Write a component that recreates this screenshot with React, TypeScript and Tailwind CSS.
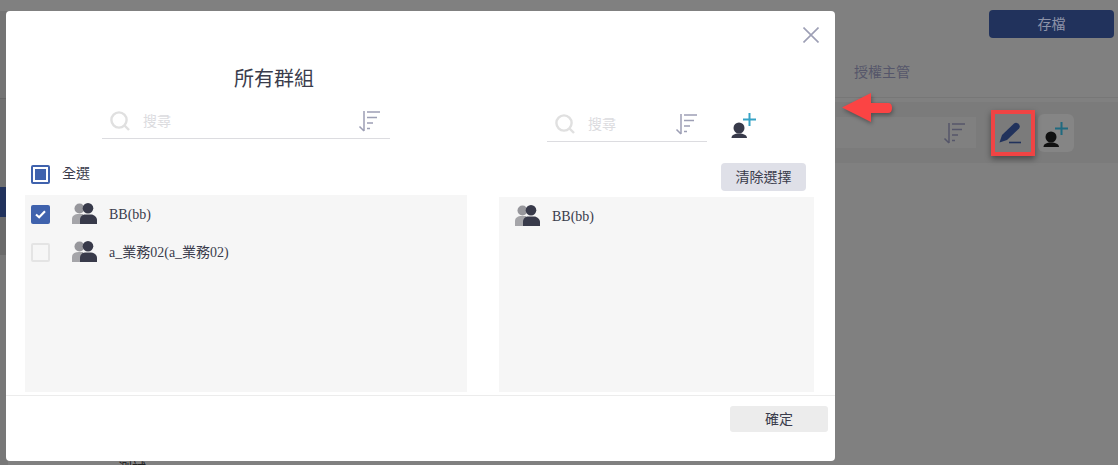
const cjk = { fontFamily: '"Liberation Serif","Noto Sans CJK TC",serif' };

function Group({ className = "" }: { className?: string }) {
  return (
    <svg viewBox="0 0 25 22" className={`w-[25px] h-[22px] ${className}`}>
      <circle cx="7.5" cy="5.5" r="5" fill="#97979c" />
      <path d="M0 21 V16 C0 13 2.5 11 7 11 L11 11 V21 Z" fill="#a5a5a9" />
      <circle cx="16" cy="5.3" r="5.3" fill="#383a4a" />
      <path d="M8 21 V17 C8 13 11 11.5 13 11.5 H19 C22 11.5 25 14 25 17 V21 Z" fill="#383a4a" />
    </svg>
  );
}

function SortIcon({ color = "#9d9fb5" }: { color?: string }) {
  return (
    <svg viewBox="0 0 24 24" className="w-[24px] h-[24px]" fill="none" stroke={color} strokeWidth="1.5">
      <path d="M7 2 V22 M2.5 17.5 L7 22" />
      <path d="M10 3 H23 M10 8.5 H20 M10 14 H16 M10 19.5 H13" />
    </svg>
  );
}

function SearchIcon() {
  return (
    <svg viewBox="0 0 20 20" className="w-[20px] h-[20px]" fill="none" stroke="#e0e0e0" strokeWidth="2.4">
      <circle cx="9" cy="9" r="7.6" />
      <path d="M14.5 14.5 L19 19" />
    </svg>
  );
}

function AddUser({ plus = "#37a3c6", body = "#383a4a" }: { plus?: string; body?: string }) {
  return (
    <svg viewBox="0 0 26 26" className="w-[26px] h-[26px]">
      <circle cx="8" cy="16" r="5.5" fill={body} />
      <path d="M0.5 26 C0.5 23 3.5 21.5 8 21.5 C12.5 21.5 16 23 16 26 Z" fill={body} />
      <path d="M18.5 1 V14 M12 7.5 H25" stroke={plus} strokeWidth="2" fill="none" />
    </svg>
  );
}

function Search({ width }: { width: string }) {
  return (
    <div className={`flex items-center border-b border-[#dcdce0] h-[35px] pl-[8px] pr-[9px] ${width}`}>
      <SearchIcon />
      <span className="text-[14px] text-[#dcdcdf] ml-[13px] flex-1">搜尋</span>
      <SortIcon />
    </div>
  );
}

function Row({ name, checked }: { name: string; checked?: boolean }) {
  return (
    <div className="flex items-center h-[38px] pl-[6px]">
      {checked ? (
        <div className="w-[19px] h-[19px] rounded-[2px] bg-[#3f62ad] flex items-center justify-center">
          <svg viewBox="0 0 12 10" className="w-[11px] h-[9px]" fill="none" stroke="#fff" strokeWidth="2.4">
            <path d="M1 5 L4.5 8 L11 1.5" />
          </svg>
        </div>
      ) : (
        <div className="w-[19px] h-[19px] rounded-[2px] border-2 border-[#e4e4e4] bg-[#f6f6f6]" />
      )}
      <Group className="ml-[22px]" />
      <span className="ml-[12px] text-[14px] text-[#3a3c4c]">{name}</span>
    </div>
  );
}

export default function App() {
  return (
    <div className="relative w-[1118px] h-[465px] overflow-hidden bg-[#808080]" style={cjk}>
      {/* underlying page, dimmed */}
      <div className="flex flex-col h-full">
        <div className="h-[98px] flex flex-col items-end pr-[4px] pt-[10px] border-b border-[#777777]">
          <div className="w-[125px] h-[28px] rounded-[4px] bg-[#21325c] text-[#8d93a8] text-[14px] flex items-center justify-center">存檔</div>
          <div className="self-start ml-[854px] mt-[24px] text-[14px] text-[#55566a]">授權主管</div>
        </div>
        <div className="h-[61px] mt-[4px] bg-[#7b7b7b] flex items-center justify-end pr-[44px]">
          <div className="flex items-center justify-end w-[140px] h-[31px] bg-[#808080] pr-[10px] mr-[18px]">
            <SortIcon color="#55566a" />
          </div>
          <div className="w-[36px] h-[36px] flex items-center justify-center mr-[8px] pr-[3px]">
            <svg viewBox="0 0 24 22" className="w-[24px] h-[22px]">
              <path d="M0.5 20.5 L3 13 L15 1.5 Q17 0 19 1.5 L20 2.5 Q21.5 4.5 20 6.5 L8 18 Z" fill="#21325c" />
              <path d="M10 20.5 H22" stroke="#21325c" strokeWidth="1.6" />
            </svg>
          </div>
          <div className="w-[36px] h-[38px] rounded-[6px] bg-[#858585] flex items-center justify-center pt-[3px]">
            <AddUser plus="#1f6a80" body="#111" />
          </div>
        </div>
      </div>

      {/* annotation: red arrow */}
      <svg viewBox="0 0 52 30" className="absolute left-[841px] top-[93px] w-[52px] h-[30px] drop-shadow-[1px_2px_2px_rgba(0,0,0,0.35)]">
        <path d="M1 14.5 L30 0 V10 H47 Q51 10 51 15 Q51 20 47 20 H30 V29 Z" fill="#fb4444" />
      </svg>
      {/* annotation: red box */}
      <div className="absolute left-[991px] top-[110px] w-[44px] h-[46px] border-[4px] border-[#f04444] shadow-[0_3px_6px_rgba(0,0,0,0.4)]" />

      {/* left sidebar remnants */}
      <div className="absolute left-0 top-[11px] w-[8px] flex flex-col">
        <div className="h-[87px] bg-[#747474]" />
        <div className="h-[1px] bg-[#666666]" />
        <div className="h-[88px] bg-[#707070]" />
        <div className="h-[30px] bg-[#21325c]" />
        <div className="h-[38px] bg-[#6a6a6a]" />
        <div className="h-[210px] bg-[#777777]" />
      </div>
      <div className="absolute left-[118px] top-[458px] text-[14px] text-[#222]">測試</div>

      {/* modal */}
      <div className="absolute left-[6px] top-[11px] w-[829px] h-[450px] bg-white rounded-[4px] flex flex-col">
        <div className="relative flex-1 flex pl-[19px] gap-[32px] min-h-0">
          <button className="absolute right-[16px] top-[16px]">
            <svg viewBox="0 0 16 16" className="w-[16px] h-[16px]" fill="none" stroke="#9d9fb5" strokeWidth="1.6">
              <path d="M0.5 0.5 L15.5 15.5 M15.5 0.5 L0.5 15.5" />
            </svg>
          </button>

          <div className="w-[442px] flex flex-col pb-[3px]">
            <div className="h-[57px] mt-[40px] ml-[209px] text-[20px] leading-[57px] text-[#3a3c4c]">所有群組</div>
            <div className="ml-[77px] -mt-[4px]"><Search width="w-[288px]" /></div>
            <div className="flex items-center h-[28px] mt-[21px] pl-[6px]">
              <div className="w-[19px] h-[19px] rounded-[2px] border-2 border-[#3f62ad] flex items-center justify-center">
                <div className="w-[11px] h-[11px] bg-[#3f62ad]" />
              </div>
              <span className="ml-[12px] text-[14px] text-[#3a3c4c] -mt-[1px]">全選</span>
            </div>
            <div className="flex-1 mt-[7px] bg-[#f6f6f6]">
              <Row name="BB(bb)" checked />
              <Row name="a_業務02(a_業務02)" />
            </div>
          </div>

          <div className="w-[315px] flex flex-col pb-[3px]">
            <div className="flex items-center mt-[96px] ml-[48px]">
              <Search width="w-[160px]" />
              <div className="ml-[24px]"><AddUser /></div>
            </div>
            <div className="flex justify-end mt-[21px] mr-[8px]">
              <button className="w-[85px] h-[28px] rounded-[4px] bg-[#dfe0e8] text-[14px] text-[#3a3c4c]">清除選擇</button>
            </div>
            <div className="flex-1 mt-[6px] bg-[#f6f6f6]">
              <div className="flex items-center h-[38px] pl-[16px]">
                <Group />
                <span className="ml-[12px] text-[14px] text-[#3a3c4c]">BB(bb)</span>
              </div>
            </div>
          </div>
        </div>
        <div className="h-[66px] border-t border-[#ececec] flex justify-end pt-[10px] pr-[7px]">
          <button className="w-[98px] h-[26px] rounded-[3px] bg-[#ececec] text-[14px] text-[#3a3c4c]">確定</button>
        </div>
      </div>
    </div>
  );
}
